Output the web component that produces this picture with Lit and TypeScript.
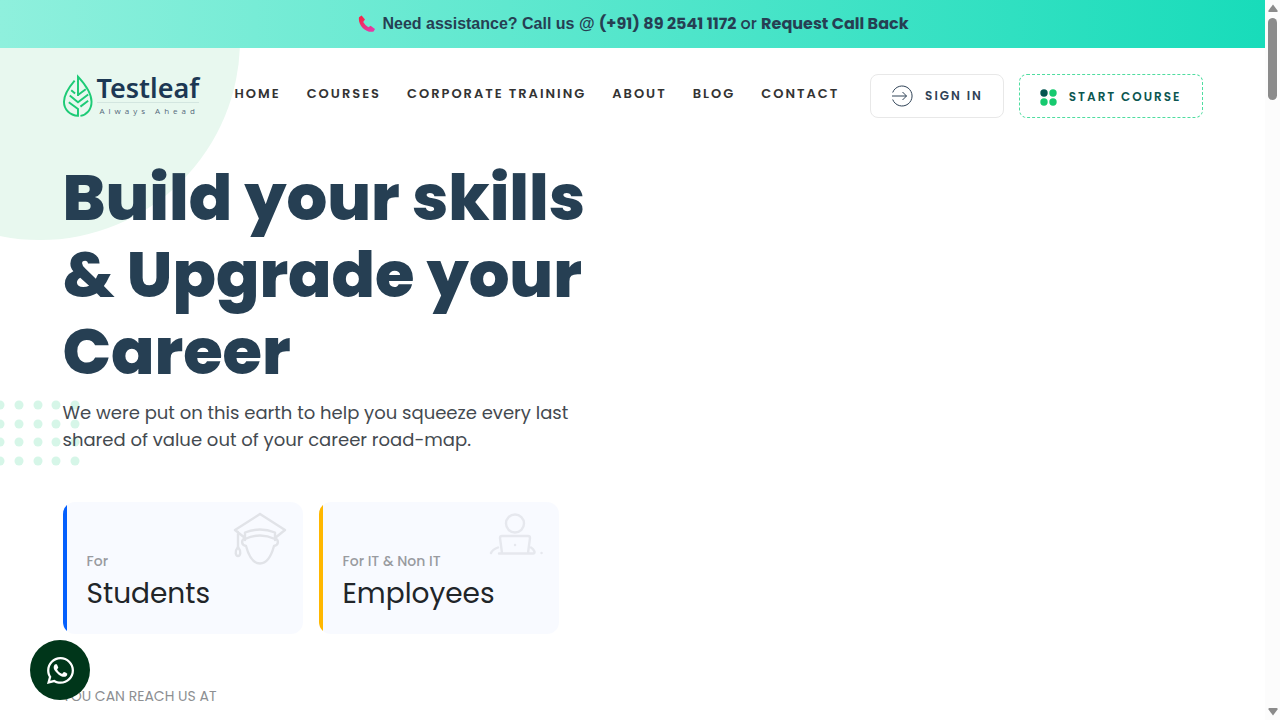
import { LitElement, html, css, svg } from "lit";
import { customElement } from "lit/decorators.js";

const NAV = ["HOME", "COURSES", "CORPORATE TRAINING", "ABOUT", "BLOG", "CONTACT"];
const DOT_X = [0, 19, 38, 56, 75];
const DOT_Y = [5, 24, 42, 61];

@customElement("app-root")
export class AppRoot extends LitElement {
  static styles = css`
    :host {
      display: grid;
      grid-template-columns: minmax(0, 1fr) 15px;
      height: 100vh;
      overflow: hidden;
      background: #fff;
      color: #263f53;
      font-family: Poppins, Inter, "Open Sans", sans-serif;
    }
    * { box-sizing: border-box; }
    a { color: inherit; text-decoration: none; }
    .page { position: relative; overflow: hidden; }
    .banner {
      height: 48px;
      display: flex;
      align-items: center;
      justify-content: center;
      gap: 6px;
      padding-left: 2px;
      background: linear-gradient(90deg, #8ff0dd, #18dcba);
      font-size: 16px;
      line-height: 24px;
      font-weight: 500;
    }
    .banner svg { width: 18px; height: 18px; }
    .banner p { margin: 0; }
    .arial { font-family: "Liberation Sans", sans-serif; font-weight: 700; }
    .banner a { font-weight: 700; }
    .body { position: relative; overflow: hidden; }
    .circle {
      position: absolute;
      left: -160px;
      top: -208px;
      width: 400px;
      height: 400px;
      border-radius: 50%;
      background: #e8f8ef;
    }
    .dots { position: absolute; left: 0; top: 352px; width: 80px; height: 66px; fill: #d6f6e8; }
    .container { position: relative; max-width: 1140px; margin: 0 auto; }
    header { display: flex; align-items: flex-start; padding-top: 26px; }
    .logo { display: flex; gap: 4px; width: 172px; }
    .leaf { width: 30px; height: 44px; fill: none; stroke: #1dcb76; stroke-width: 2; }
    .wordmark { color: #1c3854; }
    .name {
      display: block;
      font: 600 27px/28px "Noto Sans", "Open Sans", sans-serif;
      border-bottom: 1px solid #d3e6e0;
    }
    .tag {
      display: block;
      font: 400 8px/15px "Open Sans", sans-serif;
      letter-spacing: 4px;
      padding-left: 3px;
      color: #54687b;
    }
    nav { display: flex; gap: 26px; padding-top: 9px; color: #333; }
    nav a { font-size: 13px; line-height: 21px; font-weight: 600; letter-spacing: 2px; }
    .actions { display: flex; gap: 15px; margin-left: auto; }
    button {
      height: 44px;
      display: flex;
      align-items: center;
      gap: 12px;
      padding: 0 20px;
      border-radius: 8px;
      background: #fff;
      font: 600 12px/18px Poppins, Inter, sans-serif;
      letter-spacing: 2px;
      color: #2f4256;
    }
    .signin { border: 1px solid #e8e8e8; }
    .signin svg { width: 22px; height: 22px; fill: none; stroke: #2f4256; }
    .start { border: 1px dashed #4fdda0; color: #0b5650; padding-top: 2px; }
    .start svg { width: 17px; height: 17px; fill: #16ca6f; }
    .start .dark { fill: #055651; }
    h1 { margin: 41px 0 0; max-width: 560px; font-size: 64px; line-height: 77px; font-weight: 800; }
    .lead { margin: 9px 0 0; max-width: 540px; font-size: 18px; line-height: 27px; color: #444a50; }
    .cards { display: flex; gap: 16px; margin-top: 49px; }
    .card {
      position: relative;
      overflow: hidden;
      width: 240px;
      height: 132px;
      padding: 49px 24px 0;
      border-radius: 12px;
      background: linear-gradient(90deg, #0560fd 4px, #f8faff 4px);
      color: #212529;
    }
    .card.amber { background: linear-gradient(90deg, #ffb700 4px, #f8faff 4px); }
    .card small { display: block; font-size: 14px; line-height: 21px; font-weight: 500; color: #999b9f; }
    .card strong { display: block; font-size: 28px; line-height: 44px; font-weight: 400; }
    .card svg { position: absolute; right: 16px; top: 10px; width: 54px; height: 54px; fill: none; stroke: #e1e3e8; stroke-width: 2.4; stroke-linejoin: round; stroke-linecap: round; }
    .card.amber svg { stroke: #e6e8ee; }
    .reach { margin: 52px 0 0; font-size: 14px; line-height: 20px; font-weight: 400; color: #8d8f92; }
    .chat {
      position: absolute;
      left: 30px;
      bottom: 20px;
      width: 60px;
      height: 60px;
      border-radius: 50%;
      background: #00361a;
      display: grid;
      place-items: center;
    }
    .chat svg { width: 27px; height: 27px; fill: #fff; }
    .scroll { display: flex; flex-direction: column; align-items: center; background: #fcfcfc; padding: 4px 0; }
    .thumb { width: 9px; height: 82px; border-radius: 5px; background: #8b8b8b; margin-top: 6px; }
    .scroll svg { width: 10px; height: 8px; fill: #8b8b8b; }
    .down { margin-top: auto; }
  `;

  render() {
    return html`
      <div class="page">
        <div class="banner">
          <svg viewBox="0 0 18 18" aria-hidden="true">
            <defs><linearGradient id="ph" x1="0" y1="0" x2="0.6" y2="1"><stop offset="0.2" stop-color="#f4284e" /><stop offset="1" stop-color="#e23ba6" /></linearGradient></defs>
            <path fill="url(#ph)" d="M1 2.200 3.600 .600 7 4.600 5.200 7Q7.400 10.800 10.400 12.200L12.600 10.800 17 14 15.600 16.600C8 18.500-.4 10 1 2.200Z" />
          </svg>
          <p><span class="arial">Need assistance? Call us @</span> <a href="#call">(+91) 89 2541 1172</a> or <a href="#callback">Request Call Back</a></p>
        </div>
        <div class="body">
          <div class="circle"></div>
          <svg class="dots" viewBox="0 0 80 66" aria-hidden="true">
            ${DOT_Y.map((y) => DOT_X.map((x) => svg`<circle cx=${x} cy=${y} r="4.5" />`))}
          </svg>
          <div class="container">
            <header>
              <a class="logo" href="#home">
                <svg class="leaf" viewBox="0 0 31 44" aria-hidden="true">
                  <path d="M12 6C6 13 1 20 1 28c0 8 6 14 14.500 14.500V35.500L6 28.500M15.500 22V2C22 9 29.500 18 29.500 28c0 8-5 13.500-11.500 14.500M8.500 16l4 3.500M15.500 21l8-6M7 21.500l8.500 7 10.500-8M18 33l8-6" />
                </svg>
                <span class="wordmark"><span class="name">Testleaf</span><span class="tag">Always Ahead</span></span>
              </a>
              <nav>${NAV.map((n) => html`<a href="#">${n}</a>`)}</nav>
              <div class="actions">
                <button class="signin">
                  <svg viewBox="0 0 22 22"><path d="M1.700 7.500a10 10 0 1 1 0 7M1 11h14.500M11.500 7l4 4-4 4" /></svg>SIGN IN
                </button>
                <button class="start">
                  <svg viewBox="0 0 17 17"><circle class="dark" cx="4" cy="4" r="3.700" /><circle cx="13" cy="4" r="3.700" /><circle cx="4" cy="13" r="3.700" /><circle cx="13" cy="13" r="3.700" /></svg>START COURSE
                </button>
              </div>
            </header>
            <main>
              <h1>Build your skills<br />&amp; Upgrade your<br />Career</h1>
              <p class="lead">We were put on this earth to help you squeeze every last<br />shared of value out of your career road-map.</p>
              <div class="cards">
                <a class="card" href="#students">
                  <svg viewBox="0 0 54 54">
                    <path d="M27 2 2 18l10 8M27 2l25 16-10 8M12 28v-7.500q15-6 30 0V28M12 27q15-7 30 0M12 26c-4 2-4 7 1 8 3 11 8 17.500 14 17.500S38 45 41 34c5-1 5-6 1-8M5 20v15" />
                    <path d="M5 35c-4 5-2 9 0 9s4-4 0-9Z" />
                  </svg>
                  <small>For</small><strong>Students</strong>
                </a>
                <a class="card amber" href="#employees">
                  <svg viewBox="0 0 54 54">
                    <circle cx="26" cy="11.500" r="9" />
                    <path d="M13 41 11 26q0-2 2-2h26q2 0 2 2l-2 15M10 41.500h34.500c2 0 1-4-2.500-6M2 41c1-3 3-4 7-5.500M52.500 41h.1M26 33h.1" />
                  </svg>
                  <small>For IT &amp; Non IT</small><strong>Employees</strong>
                </a>
              </div>
              <p class="reach">YOU CAN REACH US AT</p>
            </main>
          </div>
        </div>
        <a class="chat" href="#chat" aria-label="Chat on WhatsApp">
          <svg viewBox="0 0 448 448">
            <path d="M380.900 65.100C339 23.100 283.200 0 223.900 0 101.500 0 1.900 99.600 1.900 222c0 39.100 10.200 77.300 29.600 111L0 448l117.700-30.900c32.400 17.700 68.900 27 106.100 27h.1c122.300 0 224.100-99.600 224.100-222 0-59.300-25.200-115-67.100-157zm-157 341.600c-33.200 0-65.700-8.900-94-25.700l-6.700-4-69.800 18.300L72 327.200l-4.400-7c-18.500-29.400-28.200-63.300-28.200-98.200 0-101.700 82.800-184.500 184.600-184.500 49.300 0 95.600 19.200 130.400 54.100 34.800 34.900 56.200 81.200 56.100 130.500 0 101.800-84.900 184.600-186.600 184.600zm101.200-138.200c-5.500-2.800-32.800-16.200-37.900-18-5.100-1.900-8.800-2.800-12.500 2.800-3.700 5.600-14.300 18-17.600 21.800-3.200 3.700-6.500 4.200-12 1.400-32.600-16.300-54-29.100-75.500-66-5.700-9.800 5.700-9.100 16.300-30.300 1.800-3.700.9-6.900-.5-9.700-1.400-2.800-12.500-30.100-17.100-41.200-4.500-10.800-9.100-9.300-12.500-9.500-3.200-.2-6.900-.2-10.600-.2-3.700 0-9.700 1.400-14.800 6.900-5.100 5.600-19.400 19-19.400 46.300 0 27.300 19.900 53.700 22.600 57.400 2.800 3.700 39.100 59.700 94.800 83.800 35.200 15.200 49 16.500 66.600 13.900 10.700-1.600 32.800-13.400 37.400-26.400 4.600-13 4.600-24.100 3.200-26.400-1.300-2.500-5-3.900-10.500-6.600z" />
          </svg>
        </a>
      </div>
      <div class="scroll" aria-hidden="true">
        <svg viewBox="0 0 10 8"><path d="M5 0.500 9.500 6.500Q10 8 8.500 8h-7Q0 8 .5 6.500Z" /></svg>
        <div class="thumb"></div>
        <svg class="down" viewBox="0 0 10 8"><path d="M5 7.500 9.500 1.500Q10 0 8.500 0h-7Q0 0 .5 1.500Z" /></svg>
      </div>
    `;
  }
}
